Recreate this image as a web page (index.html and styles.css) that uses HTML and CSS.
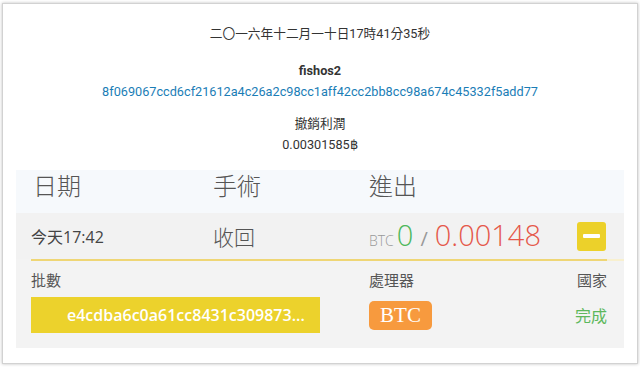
FILE: index.html
```html
<!DOCTYPE html>
<html lang="zh-Hant">
<head>
    <meta charset="UTF-8">
    <title>交易詳情</title>
    <link rel="stylesheet" href="styles.css">
</head>
<body>
    <div class="modal">
        <div class="summary">
            <p class="date">二〇一六年十二月一十日17時41分35秒</p>
            <p class="user">fishos2</p>
            <p class="hash">8f069067ccd6cf21612a4c26a2c98cc1aff42cc2bb8cc98a674c45332f5add77</p>
            <p class="label">撤銷利潤</p>
            <p class="amount">0.00301585฿</p>
        </div>
        <div class="table">
            <div class="thead">
                <span>日期</span>
                <span>手術</span>
                <span>進出</span>
            </div>
            <div class="row">
                <span class="time">今天17:42</span>
                <span class="op">收回</span>
                <span class="flow">
                    <small>BTC</small>
                    <b class="in">0</b>
                    <i class="sep">/</i>
                    <b class="out">0.00148</b>
                </span>
                <button class="toggle" type="button"><span></span></button>
            </div>
            <div class="details">
                <div class="detail-head">
                    <span>批數</span>
                    <span>處理器</span>
                    <span class="right">國家</span>
                </div>
                <div class="detail-body">
                    <div class="batch">e4cdba6c0a61cc8431c309873...</div>
                    <div class="proc"><span class="badge">BTC</span></div>
                    <div class="status">完成</div>
                </div>
            </div>
        </div>
    </div>
</body>
</html>
```

FILE: styles.css
```css
body {
    margin: 0;
    background: #fff;
    font-family: "Open Sans", "Noto Sans CJK TC", sans-serif;
    color: #333;
}
.modal {
    margin: 3px 2px;
    height: 359px;
    background: #fff;
    border: 1px solid #d2d2d2;
    box-shadow: 0 0 3px rgba(0,0,0,0.25);
}
.summary {
    padding-top: 20px;
    text-align: center;
    font-family: Roboto, "Noto Sans CJK TC", sans-serif;
    font-size: 12.7px;
}
.summary p { margin: 0; line-height: 20px; }
.user { margin-top: 17px !important; font-weight: 700; }
.hash { margin-top: 1px !important; color: #1a7db6; }
.label { margin-top: 12px !important; }
.amount { margin-top: 1px !important; }

.table { margin: 15px 13px 0 13px; }
.thead {
    display: grid;
    grid-template-columns: 180px 156px 1fr;
    height: 43px;
    box-sizing: border-box;
    padding: 3px 0 0 17px;
    align-items: start;
    background: #f6f9fc;
    font-size: 24px;
    line-height: 26px;
    font-weight: 300;
    color: #555;
}
.row {
    display: grid;
    grid-template-columns: 182px 156px 1fr 29px;
    align-items: center;
    height: 46px;
    padding: 0 17px 0 15px;
    background: #f2f2f2;
    color: #444;
}
.time { font-size: 16px; }
.op { font-size: 21px; font-weight: 300; color: #555; }
.flow { display: flex; align-items: baseline; gap: 3px; }
.flow small { font-size: 14px; color: #999; font-weight: 300; }
.flow b { font-weight: 300; font-size: 29px; line-height: 1; }
.flow .in { color: #4cb85a; }
.flow .out { color: #e5584a; }
.flow .sep { font-style: normal; color: #999; font-size: 20px; margin: 0 4px; }
.toggle {
    width: 29px;
    height: 29px;
    border: none;
    border-radius: 3px;
    background: #ecd12a;
    padding: 0;
    margin-left: -1px;
    display: flex;
    align-items: center;
    justify-content: center;
    cursor: pointer;
}
.toggle span { width: 17px; height: 4px; background: #fff; border-radius: 1px; }

.details {
    background: #f3f3f3;
    padding: 0 17px 15px 15px;
}
.details::before {
    content: "";
    display: block;
    height: 2px;
    background: #efd675;
    box-shadow: 17px 0 0 #f8f0cf;
}
.detail-head {
    display: grid;
    grid-template-columns: 338px 1fr auto;
    margin-top: 9px;
    font-size: 15px;
    color: #555;
    line-height: 20px;
}
.right { text-align: right; }
.detail-body {
    display: grid;
    grid-template-columns: 338px 1fr auto;
    align-items: center;
    margin-top: 7px;
}
.batch {
    width: 289px;
    height: 36px;
    line-height: 36px;
    box-sizing: border-box;
    padding-left: 36px;
    background: #ecd22c;
    color: #fff;
    font-size: 16px;
    font-weight: 600;
    white-space: nowrap;
    overflow: hidden;
}
.badge {
    display: inline-block;
    width: 63px;
    height: 29px;
    line-height: 29px;
    text-align: center;
    border-radius: 5px;
    background: #f79a3e;
    color: #fff;
    font-family: "Liberation Serif", serif;
    font-size: 21px;
}
.status { color: #5cb85c; font-size: 16px; }
```
